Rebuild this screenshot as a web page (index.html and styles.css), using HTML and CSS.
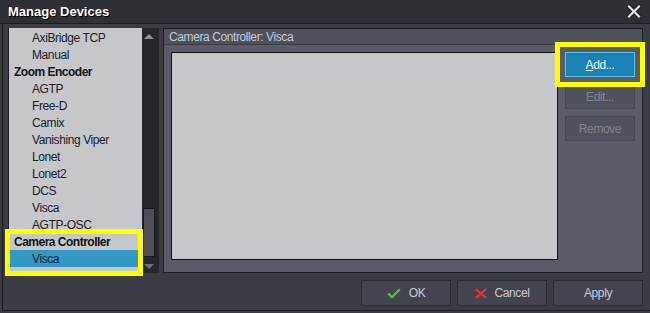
FILE: index.html
```html
<!DOCTYPE html>
<html lang="en">
<head>
    <meta charset="UTF-8">
    <meta name="viewport" content="width=device-width, initial-scale=1.0">
    <title>Manage Devices</title>
    <link rel="stylesheet" href="styles.css">
</head>
<body>
    <header class="titlebar">
        <h1>Manage Devices</h1>
        <button class="close-btn" aria-label="Close">
            <svg width="14" height="13" viewBox="0 0 14 13">
                <path d="M2 1.5 L12 11.5 M12 1.5 L2 11.5" stroke="#18191c" stroke-width="4" stroke-linecap="square"/>
                <path d="M2 1.5 L12 11.5 M12 1.5 L2 11.5" stroke="#e4e4e6" stroke-width="2.2" stroke-linecap="square"/>
            </svg>
        </button>
    </header>

    <div class="frame">
        <div class="main-row">
            <div class="device-list">
                <ul class="tree">
                    <li class="child">AxiBridge TCP</li>
                    <li class="child">Manual</li>
                    <li class="group">Zoom Encoder</li>
                    <li class="child">AGTP</li>
                    <li class="child">Free-D</li>
                    <li class="child">Camix</li>
                    <li class="child">Vanishing Viper</li>
                    <li class="child">Lonet</li>
                    <li class="child">Lonet2</li>
                    <li class="child">DCS</li>
                    <li class="child">Visca</li>
                    <li class="child">AGTP-OSC</li>
                    <li class="group">Camera Controller</li>
                    <li class="child selected">Visca</li>
                </ul>
                <div class="scrollbar">
                    <div class="arrow-box"><span class="arrow-up"></span></div>
                    <div class="track"><div class="thumb"></div></div>
                    <div class="arrow-box"><span class="arrow-down"></span></div>
                </div>
            </div>

            <section class="device-panel">
                <div class="panel-title">Camera Controller: Visca</div>
                <div class="panel-body">
                    <div class="device-box"></div>
                    <div class="side-buttons">
                        <button class="side-btn primary"><u>A</u>dd...</button>
                        <button class="side-btn" disabled>Edit...</button>
                        <button class="side-btn" disabled>Remove</button>
                    </div>
                </div>
            </section>
        </div>

        <div class="dialog-buttons">
            <button class="dlg-btn">
                <svg width="14" height="11" viewBox="0 0 14 11">
                    <path d="M1.2 5.4 L5 9.2 L12.8 1.2" fill="none" stroke="#5cb848" stroke-width="2.3"/>
                </svg>
                OK
            </button>
            <button class="dlg-btn">
                <svg width="12" height="11" viewBox="0 0 12 11">
                    <path d="M1 1 L11 10 M11 1 L1 10" stroke="#e8362a" stroke-width="2.3"/>
                </svg>
                Cancel
            </button>
            <button class="dlg-btn">Apply</button>
        </div>
    </div>

    <!-- yellow annotation boxes -->
    <div class="highlight hl-list"></div>
    <div class="highlight hl-add"></div>
</body>
</html>
```

FILE: styles.css
```css
body {
    font-family: "Liberation Sans", Arial, sans-serif;
    font-size: 12px;
    letter-spacing: -0.4px;
    background-color: #3c3d44;
    color: #c3ccd8;
    margin: 0;
    padding: 0;
    width: 650px;
    height: 313px;
    position: relative;
    overflow: hidden;
}
.titlebar {
    height: 23px;
    background-color: #2f3035;
    border-bottom: 1px solid #1c1d21;
    display: flex;
    align-items: center;
    justify-content: space-between;
    padding: 0 9px 0 8px;
}
.titlebar h1 {
    margin: 0;
    font-size: 13px;
    letter-spacing: 0;
    font-weight: bold;
    color: #fff;
    text-shadow: 1px 1px 1px #000;
}
.close-btn {
    background: none;
    border: none;
    padding: 0;
    display: flex;
    margin-top: -1px;
}
.frame {
    margin: 0 0 2px 2px;
    border-left: 1px solid #1c1d21;
    border-bottom: 1px solid #1c1d21;
    padding: 4px 7px 4px 5px;
    display: flex;
    flex-direction: column;
    gap: 7px;
}
.main-row {
    height: 245px;
    display: flex;
    gap: 4px;
}
.device-list {
    width: 150px;
    border-left: 1px solid #1e1f23;
    display: flex;
}
.tree {
    list-style: none;
    margin: 0;
    padding: 1px 0 0 0;
    flex: 1;
    background-color: #c6c7cb;
    color: #1a1c28;
}
.tree li {
    height: 17px;
    line-height: 18px;
    white-space: nowrap;
    margin-left: 1px;
}
.tree .group {
    font-weight: bold;
    letter-spacing: -0.5px;
    color: #101116;
    padding-left: 4px;
}
.tree .child {
    padding-left: 22px;
}
.tree .selected {
    background-color: #3398c6;
    color: #0c2536;
}
.scrollbar {
    width: 12px;
    padding: 0 4px 0 1px;
    background-color: #26272c;
    display: flex;
    flex-direction: column;
}
.arrow-box {
    height: 16px;
    display: flex;
    align-items: center;
    justify-content: center;
}
.arrow-box:last-child {
    height: 14px;
}
.arrow-up {
    width: 0;
    height: 0;
    border-left: 5px solid transparent;
    border-right: 5px solid transparent;
    border-bottom: 5px solid #8a8c94;
}
.arrow-down {
    width: 0;
    height: 0;
    border-left: 5px solid transparent;
    border-right: 5px solid transparent;
    border-top: 5px solid #6e7079;
}
.track {
    flex: 1;
    display: flex;
    flex-direction: column;
    justify-content: flex-end;
    padding-bottom: 2px;
}
.thumb {
    height: 49px;
    background-color: #4d4f59;
    border: 1px solid #1a1b1f;
    box-sizing: border-box;
}
.device-panel {
    flex: 1;
    border: 1px solid #1e1f24;
    background-color: #5a5d68;
    display: flex;
    flex-direction: column;
}
.panel-title {
    height: 15px;
    line-height: 16px;
    padding-left: 5px;
    background-color: #4f525c;
    border-bottom: 1px solid #3a3c44;
    color: #c2ccd8;
}
.panel-body {
    flex: 1;
    display: flex;
    gap: 7px;
    padding: 7px 7px 12px 7px;
}
.device-box {
    flex: 1;
    background-color: #c6c7cb;
    border: 1px solid #0e0e10;
}
.side-buttons {
    width: 70px;
    display: flex;
    flex-direction: column;
    gap: 7px;
}
.side-btn {
    height: 25px;
    font-family: inherit;
    font-size: 12px;
    letter-spacing: -0.4px;
    background-color: #50535d;
    border: 1px solid #464953;
    color: #80848e;
    padding: 0;
}
.side-btn.primary {
    background-color: #1a82b4;
    border-color: #5ec0ea;
    color: #f2f8fc;
}
.dialog-buttons {
    height: 26px;
    display: flex;
    justify-content: flex-end;
    gap: 6px;
}
.dlg-btn {
    width: 90px;
    font-family: inherit;
    font-size: 12px;
    letter-spacing: -0.4px;
    background-color: #43454e;
    border: 1px solid #2c2e33;
    color: #c3ccd8;
    display: flex;
    align-items: center;
    justify-content: center;
    gap: 8px;
    padding: 0;
}
.highlight {
    position: absolute;
    border: 5px solid #ffff00;
    box-sizing: border-box;
    pointer-events: none;
}
.hl-list {
    left: 5px;
    top: 229px;
    width: 138px;
    height: 47px;
}
.hl-add {
    left: 555px;
    top: 42px;
    width: 90px;
    height: 45px;
}
```
